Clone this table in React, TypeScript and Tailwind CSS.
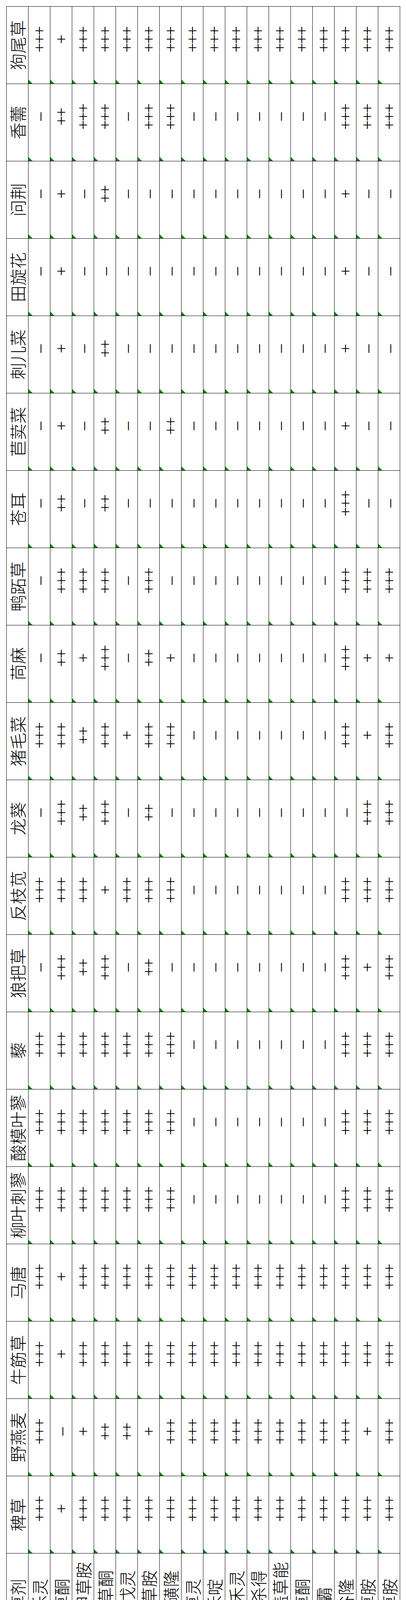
const HERBICIDES = [
  '氟乐灵',
  '嗪草酮',
  '异丙甲草胺',
  '异噁草酮',
  '二甲戊灵',
  '异丙草胺',
  '砜嘧磺隆',
  '禾草灵',
  '烯禾啶',
  '精喹禾灵',
  '精稳杀得',
  '高效盖草能',
  '烯草酮',
  '威霸',
  '利谷隆',
  '甲草胺',
  '乙草胺',
]

// one string per weed, one digit per herbicide: 0 = –, n = n × "+"
const WEEDS: [string, string][] = [
  ['稗草', '31333333333333333'],
  ['野燕麦', '30122133333333313'],
  ['牛筋草', '31333333333333333'],
  ['马唐', '31333333333333333'],
  ['柳叶刺蓼', '33333330000000333'],
  ['酸模叶蓼', '33333330000000333'],
  ['藜', '33333330000000333'],
  ['狼把草', '03230200000000313'],
  ['反枝苋', '33313330000000333'],
  ['龙葵', '03230200000000033'],
  ['猪毛菜', '33231330000000313'],
  ['苘麻', '02130210000000311'],
  ['鸭跖草', '03330300000000333'],
  ['苍耳', '02020000000000300'],
  ['苣荬菜', '01020020000000100'],
  ['刺儿菜', '01020000000000100'],
  ['田旋花', '01000000000000100'],
  ['问荆', '01020000000000100'],
  ['香薷', '02330330000000333'],
  ['狗尾草', '31333333333333333'],
]

const head =
  "flex items-center justify-center border-b border-r border-black pt-px whitespace-nowrap text-black font-light font-['Noto_Sans_CJK_SC',sans-serif] text-[42.67px] leading-none"
const cell =
  "relative flex items-center justify-center border-b border-r border-black pt-px pl-[28px] whitespace-nowrap text-black font-['Liberation_Serif','Noto_Sans_CJK_SC',serif] text-[42.67px] leading-none tracking-[-2.4px]"

function mark(c: string) {
  return c === '0' ? '–' : '+'.repeat(Number(c))
}

function HerbicideSheet() {
  return (
    <div className="grid w-[4219px] grid-cols-[258px_repeat(20,198px)] auto-rows-[56px] border-l border-t border-black bg-white">
      <div className={head}>除草剂</div>
      {WEEDS.map(([name]) => (
        <div key={name} className={head}>
          {name}
        </div>
      ))}
      {HERBICIDES.map((h, i) => (
        <div key={h} className="contents">
          <div className={head}>{h}</div>
          {WEEDS.map(([name, vals]) => (
            <div key={name} className={cell}>
              <span className="absolute left-0 top-0 h-0 w-0 border-r-[10px] border-t-[10px] border-r-transparent border-t-[#008000]" />
              {mark(vals[i])}
            </div>
          ))}
        </div>
      ))}
    </div>
  )
}

export default function App() {
  return (
    <div className="h-[4250px] w-[1040px] bg-white p-4">
      <div className="relative h-[4218px] w-[1008px]">
        {/* the sheet is printed turned a quarter turn to the left */}
        <div className="absolute left-0 top-[4219px] origin-top-left -rotate-90">
          <HerbicideSheet />
        </div>
      </div>
    </div>
  )
}
